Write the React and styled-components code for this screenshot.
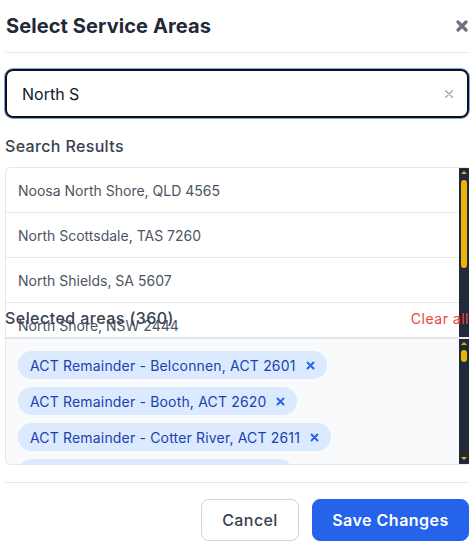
import React from "react";
import styled, { createGlobalStyle } from "styled-components";

const Global = createGlobalStyle`
  html, body { margin: 0; padding: 0; background: #ffffff; }
  body { font-family: Inter, "Open Sans", "Liberation Sans", sans-serif; }
  * { box-sizing: border-box; }
`;

const Modal = styled.div`
  width: 475px;
  padding: 0 6px 0 5px;
  background: #fff;
`;

const Header = styled.div`
  height: 53px;
  display: flex;
  align-items: center;
  justify-content: space-between;
  border-bottom: 1px solid #e5e7eb;
  padding-left: 1px;
`;

const Title = styled.h2`
  margin: 0;
  font-size: 20px;
  font-weight: 700;
  color: #1f2937;
  letter-spacing: 0.1px;
`;

const IconButton = styled.button`
  border: none;
  background: none;
  padding: 0;
  display: flex;
  align-items: center;
  justify-content: center;
  width: ${(p) => p.$size}px;
  height: ${(p) => p.$size}px;
  color: ${(p) => p.$color};
  cursor: pointer;
`;

const InputWrap = styled.div`
  margin-top: 16px;
  height: 49px;
  border: 2px solid #111111;
  border-radius: 8px;
  box-shadow: 0 0 0 1px #7aa7f5;
  display: flex;
  align-items: center;
  padding: 0 12px 0 15px;
`;

const Input = styled.input`
  flex: 1;
  border: none;
  outline: none;
  background: transparent;
  font-family: inherit;
  font-size: 16px;
  color: #111827;
  padding: 0;
`;

const Label = styled.div`
  margin-top: 16px;
  height: 24px;
  line-height: 24px;
  font-size: 16px;
  font-weight: 500;
  color: #374151;
  letter-spacing: 0.35px;
`;

const Box = styled.div`
  display: flex;
  height: ${(p) => p.$height}px;
  margin-top: ${(p) => p.$mt}px;
  border: 1px solid #e5e7eb;
  border-right: none;
  border-radius: ${(p) => p.$radius};
  background: ${(p) => p.$bg};
  overflow: hidden;
`;

const List = styled.div`
  flex: 1;
  overflow: hidden;
`;

const Row = styled.div`
  height: 45px;
  display: flex;
  align-items: center;
  padding-left: 12px;
  border-bottom: 1px solid #e5e7eb;
  font-size: 14px;
  color: #4b5563;
`;

const Rail = styled.div`
  width: 10px;
  background: #1f2937;
  display: flex;
  flex-direction: column;
  align-items: center;
  padding: 3px 0 4px;
`;

const Up = styled.div`
  width: 0;
  height: 0;
  border-left: 3px solid transparent;
  border-right: 3px solid transparent;
  border-bottom: 3px solid #eab308;
`;

const Down = styled.div`
  margin-top: auto;
  width: 0;
  height: 0;
  border-left: 3px solid transparent;
  border-right: 3px solid transparent;
  border-top: 3px solid #eab308;
`;

const Thumb = styled.div`
  width: 6px;
  margin-top: ${(p) => p.$offset}px;
  height: ${(p) => p.$height}px;
  border-radius: 3px;
  background: #eab308;
`;

const SelectedHeader = styled.div`
  position: relative;
  z-index: 1;
  margin-top: -36px;
  height: 32px;
  display: flex;
  align-items: center;
  justify-content: space-between;
`;

const SelectedTitle = styled.span`
  font-size: 16px;
  font-weight: 500;
  color: #374151;
  letter-spacing: 0.45px;
`;

const ClearAll = styled.span`
  font-size: 14px;
  color: #ef4444;
  letter-spacing: 0.5px;
  margin-right: 0;
`;

const Chips = styled.div`
  flex: 1;
  padding: 12px;
  display: flex;
  flex-direction: column;
  align-items: flex-start;
  gap: 8px;
  overflow: hidden;
`;

const Chip = styled.div`
  flex-shrink: 0;
  height: 28px;
  display: flex;
  align-items: center;
  gap: 10px;
  padding: 0 12px;
  border-radius: 14px;
  background: #dbeafe;
  color: #1e40af;
  font-size: 14px;
  letter-spacing: 0.17px;
  white-space: nowrap;
`;

const Footer = styled.div`
  margin-top: 17px;
  border-top: 1px solid #e5e7eb;
  padding-top: 16px;
  display: flex;
  justify-content: flex-end;
  gap: 13px;
`;

const Button = styled.button`
  height: 42px;
  padding: 0;
  border-radius: 8px;
  font-family: inherit;
  font-size: 16px;
  font-weight: ${(p) => (p.$primary ? 600 : 500)};
  letter-spacing: ${(p) => (p.$primary ? 0.5 : 0.4)}px;
  color: ${(p) => (p.$primary ? "#ffffff" : "#374151")};
  background: ${(p) => (p.$primary ? "#2563eb" : "#ffffff")};
  border: 1px solid ${(p) => (p.$primary ? "#2563eb" : "#d1d5db")};
  width: ${(p) => p.$w}px;
`;

const XIcon = ({ size, stroke }) => (
  <svg width={size} height={size} viewBox="0 0 12 12">
    <path d="M2 2 L10 10 M10 2 L2 10" stroke="currentColor" strokeWidth={stroke} strokeLinecap="round" />
  </svg>
);

const results = [
  "Noosa North Shore, QLD 4565",
  "North Scottsdale, TAS 7260",
  "North Shields, SA 5607",
  "North Shore, NSW 2444",
];

const chips = [
  "ACT Remainder - Belconnen, ACT 2601",
  "ACT Remainder - Booth, ACT 2620",
  "ACT Remainder - Cotter River, ACT 2611",
  "ACT Remainder - Coree, ACT 2611",
];

export default function App() {
  return (
    <>
      <Global />
      <Modal>
        <Header>
          <Title>Select Service Areas</Title>
          <IconButton $size={14} $color="#6b7280" aria-label="Close">
            <XIcon size={12} stroke={3.2} />
          </IconButton>
        </Header>
        <InputWrap>
          <Input defaultValue="North S" />
          <IconButton $size={12} $color="#9ca3af" aria-label="Clear">
            <XIcon size={10} stroke={1.6} />
          </IconButton>
        </InputWrap>
        <Label>Search Results</Label>
        <Box $height={171} $mt={9} $radius="6px 0 0 0" $bg="#ffffff">
          <List>
            {results.map((r) => (
              <Row key={r}>{r}</Row>
            ))}
          </List>
          <Rail>
            <Up />
            <Thumb $offset={6} $height={88} />
          </Rail>
        </Box>
        <SelectedHeader>
          <SelectedTitle>Selected areas (360)</SelectedTitle>
          <ClearAll>Clear all</ClearAll>
        </SelectedHeader>
        <Box $height={127} $mt={4} $radius="0 0 0 6px" $bg="#f9fafb">
          <Chips>
            {chips.map((c) => (
              <Chip key={c}>
                {c}
                <IconButton $size={9} $color="#2563eb" aria-label="Remove">
                  <XIcon size={9} stroke={2.6} />
                </IconButton>
              </Chip>
            ))}
          </Chips>
          <Rail>
            <Up />
            <Thumb $offset={5} $height={12} />
            <Down />
          </Rail>
        </Box>
        <Footer>
          <Button $w={98}>Cancel</Button>
          <Button $primary $w={157}>Save Changes</Button>
        </Footer>
      </Modal>
    </>
  );
}
